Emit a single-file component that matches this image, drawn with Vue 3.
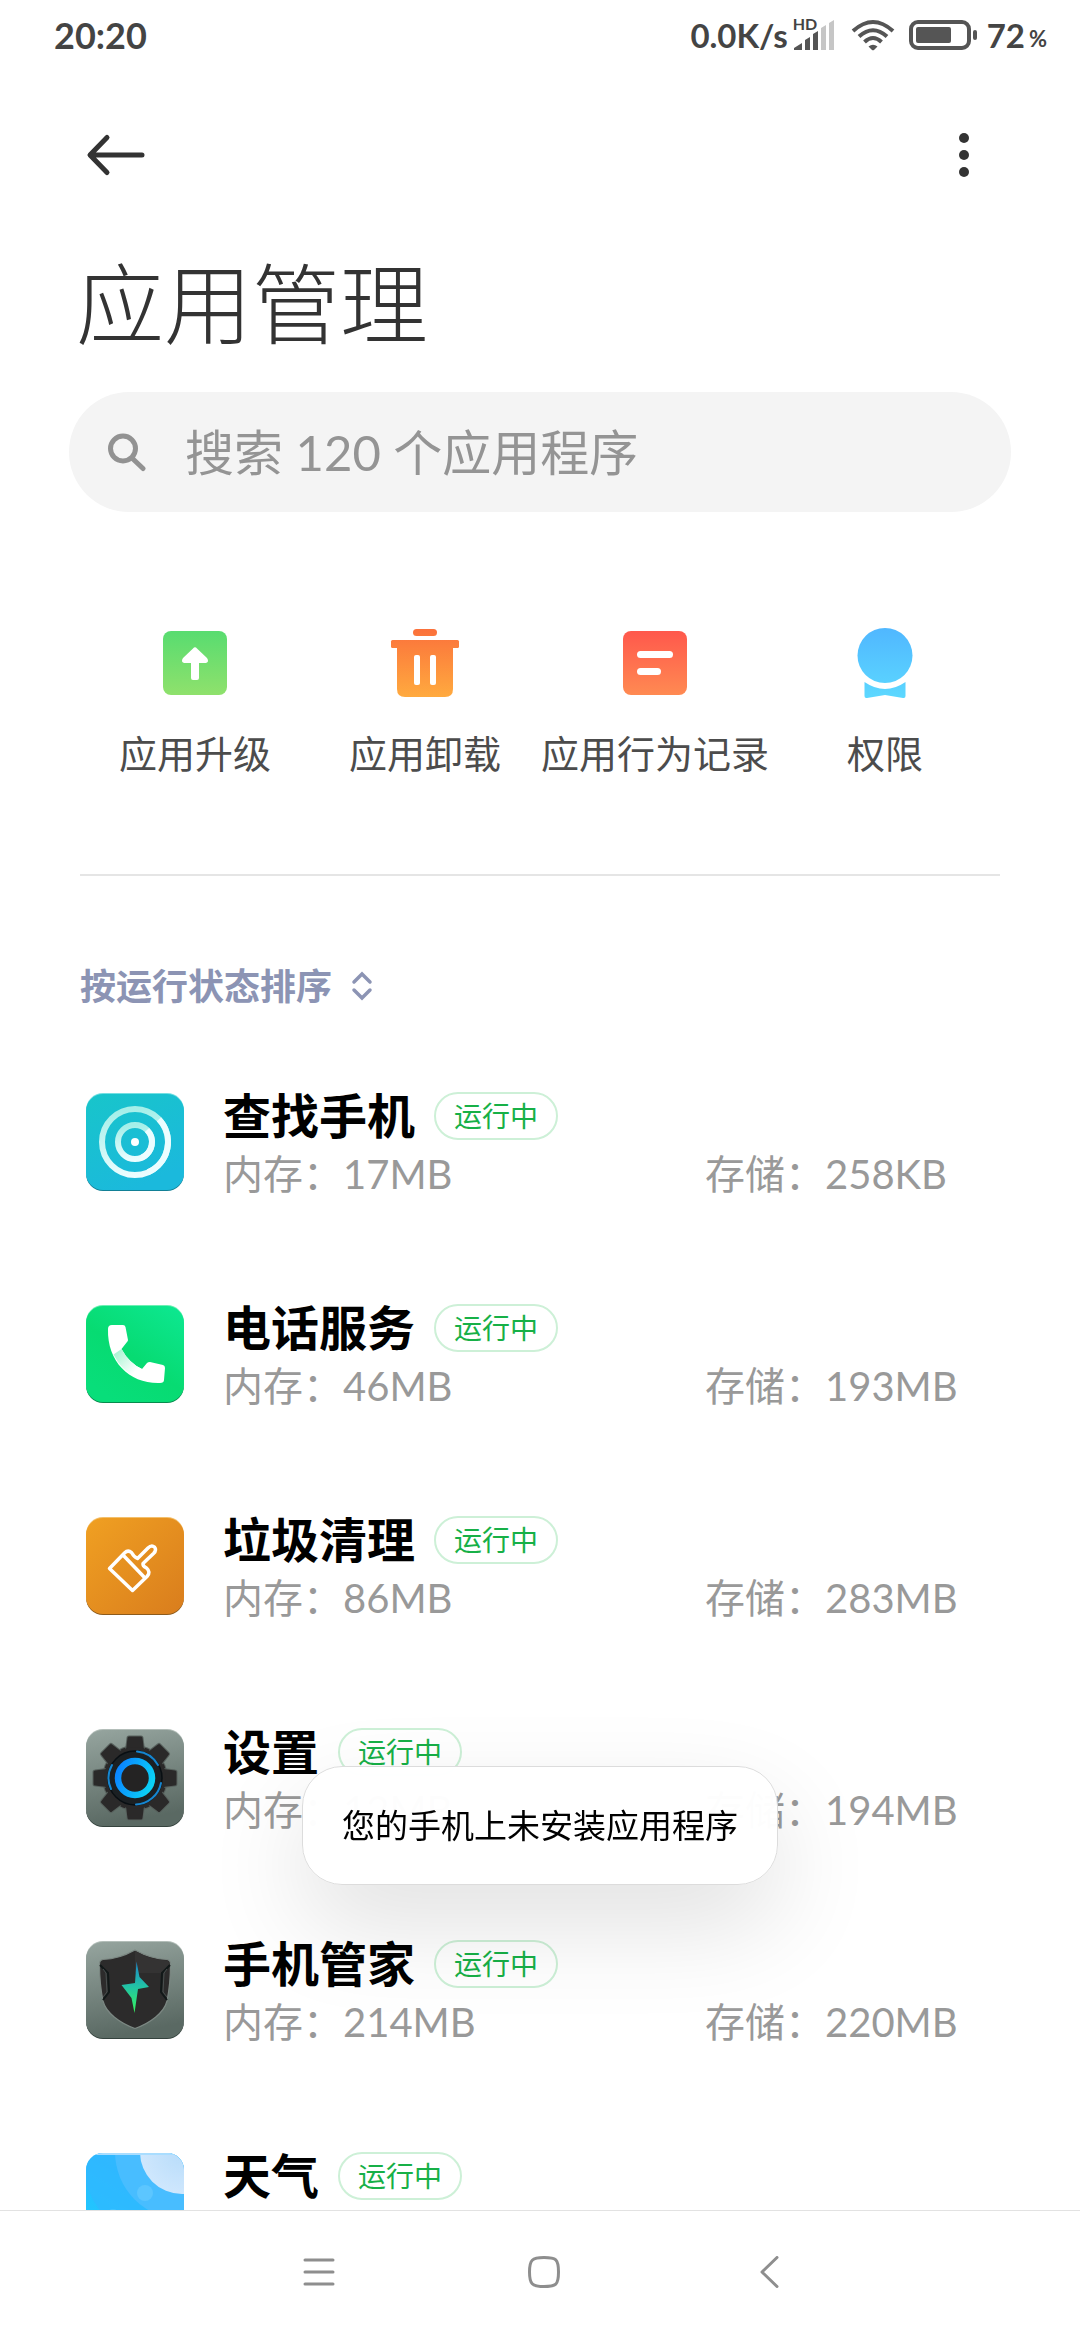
<script setup>
import { ref } from 'vue'

const keyword = ref('')

const actions = [
  { icon: 'upgrade', label: '应用升级' },
  { icon: 'uninstall', label: '应用卸载' },
  { icon: 'record', label: '应用行为记录' },
  { icon: 'permission', label: '权限' },
]

const apps = [
  { icon: 'find', name: '查找手机', memory: '17MB', storage: '258KB' },
  { icon: 'phone', name: '电话服务', memory: '46MB', storage: '193MB' },
  { icon: 'clean', name: '垃圾清理', memory: '86MB', storage: '283MB' },
  { icon: 'settings', name: '设置', memory: '12MB', storage: '194MB' },
  { icon: 'security', name: '手机管家', memory: '214MB', storage: '220MB' },
  { icon: 'weather', name: '天气' },
]

const gearTeeth = [0, 45, 90, 135, 180, 225, 270, 315]
</script>

<template>
  <div class="screen">
    <header class="status-bar">
      <span class="clock">20:20</span>
      <div class="status-right">
        <span>0.0K/s</span>
        <div class="signal">
          <span class="hd">HD</span>
          <svg width="42" height="30" viewBox="0 0 42 30">
            <path fill="#555" d="M1 30v-2l8-5v7zM12 30V20l5-3v13zM20 30V14l5-3v19z" />
            <path fill="#c6c6c6" d="M28 30V8l5-3v25zM36 30V3l5-3v30z" />
          </svg>
        </div>
        <svg class="wifi" width="44" height="32" viewBox="0 0 44 32">
          <g fill="none" stroke="#555" stroke-width="4">
            <path d="M2 12Q22 -6 42 12" />
            <path d="M8 17.500Q22 5 36 17.500" />
            <path d="M13.500 23Q22 15 30.500 23" />
          </g>
          <path fill="#555" d="M17.500 27.500Q22 24 26.500 27.500L23 31Q22 31.700 21 31z" />
        </svg>
        <svg class="battery" width="69" height="30" viewBox="0 0 69 30">
          <rect x="2" y="2" width="58" height="26" rx="7" fill="none" stroke="#555" stroke-width="4" />
          <rect x="7" y="7" width="35" height="16" rx="2" fill="#555" />
          <rect x="64" y="10" width="4" height="10" rx="2" fill="#555" />
        </svg>
        <span>72</span>
        <span class="percent">%</span>
      </div>
    </header>

    <main class="content">
      <div class="toolbar">
        <button class="icon-btn" aria-label="返回">
          <svg width="60" height="60" viewBox="0 0 60 60">
            <path
              d="M21 12.500L4 30l17 17.500M4.500 30H56"
              fill="none"
              stroke="#333"
              stroke-width="5"
              stroke-linecap="round"
              stroke-linejoin="round"
            />
          </svg>
        </button>
        <button class="icon-btn" aria-label="更多">
          <svg width="60" height="60" viewBox="0 0 60 60" fill="#333">
            <circle cx="30" cy="13" r="5" />
            <circle cx="30" cy="30" r="5" />
            <circle cx="30" cy="47" r="5" />
          </svg>
        </button>
      </div>

      <h1 class="title">应用管理</h1>

      <label class="search">
        <svg width="40" height="40" viewBox="0 0 40 40" fill="none" stroke="#929292">
          <circle cx="16" cy="16.500" r="12.500" stroke-width="5" />
          <path d="M26 27l10 9.500" stroke-width="5" stroke-linecap="round" />
        </svg>
        <input v-model="keyword" type="text" placeholder="搜索 120 个应用程序" />
      </label>

      <nav class="actions">
        <button v-for="item in actions" :key="item.icon" class="action">
          <svg v-if="item.icon === 'upgrade'" width="80" height="80" viewBox="0 0 80 80">
            <defs>
              <linearGradient id="g-upgrade" x1="0" y1="0" x2="0" y2="1">
                <stop offset="0" stop-color="#58dc70" />
                <stop offset="1" stop-color="#8fe16c" />
              </linearGradient>
            </defs>
            <rect x="8" y="8" width="64" height="64" rx="8" fill="url(#g-upgrade)" />
            <path
              fill="#fff"
              d="M38 25.500Q40 23 42 25.500L52 35Q54.500 39 51 40H44V55Q44 57 42 57H38Q36 57 36 55V40H29Q25.500 39 28 35z"
            />
          </svg>
          <svg v-else-if="item.icon === 'uninstall'" width="80" height="80" viewBox="0 0 80 80">
            <defs>
              <linearGradient id="g-uninstall" gradientUnits="userSpaceOnUse" x1="0" y1="6" x2="0" y2="74">
                <stop offset="0" stop-color="#fb713b" />
                <stop offset="1" stop-color="#ffaa3f" />
              </linearGradient>
            </defs>
            <g fill="url(#g-uninstall)">
              <rect x="28" y="6" width="24" height="7" rx="3.500" />
              <rect x="6" y="17" width="68" height="8" rx="1.500" />
              <path d="M12 22H68V66Q68 74 60 74H20Q12 74 12 66z" />
            </g>
            <rect x="29" y="32" width="6" height="30" rx="2" fill="#fff" />
            <rect x="45" y="32" width="6" height="30" rx="2" fill="#fff" />
          </svg>
          <svg v-else-if="item.icon === 'record'" width="80" height="80" viewBox="0 0 80 80">
            <defs>
              <linearGradient id="g-record" x1="0" y1="0" x2="0" y2="1">
                <stop offset="0" stop-color="#ff584c" />
                <stop offset="1" stop-color="#ff8a52" />
              </linearGradient>
            </defs>
            <rect x="8" y="8" width="64" height="64" rx="8" fill="url(#g-record)" />
            <rect x="22" y="28" width="36" height="7" rx="3.500" fill="#fff" />
            <rect x="22" y="45" width="24" height="7" rx="3.500" fill="#fff" />
          </svg>
          <svg v-else width="80" height="80" viewBox="0 0 80 80">
            <defs>
              <linearGradient id="g-permission" gradientUnits="userSpaceOnUse" x1="0" y1="5" x2="0" y2="75">
                <stop offset="0" stop-color="#50b7ff" />
                <stop offset="1" stop-color="#5cd8ff" />
              </linearGradient>
            </defs>
            <g fill="url(#g-permission)">
              <circle cx="40" cy="32.500" r="27.500" />
              <path d="M19.500 59Q40 73 60.500 59V73Q60.500 75.500 58 75L40 72 22 75Q19.500 75.500 19.500 73z" />
            </g>
          </svg>
          <span>{{ item.label }}</span>
        </button>
      </nav>

      <hr class="divider" />

      <button class="sort">
        <span>按运行状态排序</span>
        <svg width="24" height="32" viewBox="0 0 24 32">
          <path
            d="M4 12L12 4l8 8M4 20l8 8 8-8"
            fill="none"
            stroke="#8c94b4"
            stroke-width="3.500"
            stroke-linecap="round"
          />
        </svg>
      </button>

      <ul class="app-list">
        <li v-for="app in apps" :key="app.name" class="app">
          <svg v-if="app.icon === 'find'" class="app-icon" viewBox="0 0 100 100">
            <defs>
              <linearGradient id="g-find" x1="0" y1="0" x2="0.500" y2="1">
                <stop offset="0" stop-color="#18c5ca" />
                <stop offset="1" stop-color="#1bb9dc" />
              </linearGradient>
              <linearGradient id="g-find-ring" x1="0.500" y1="0" x2="0.600" y2="1">
                <stop offset="0" stop-color="#a5efe9" />
                <stop offset="1" stop-color="#ecfdff" />
              </linearGradient>
            </defs>
            <rect x="1" y="3" width="98" height="96" rx="17" fill="#128096" />
            <rect x="1" y="1" width="98" height="96" rx="17" fill="#74dfe2" />
            <rect x="1" y="2" width="98" height="96" rx="17" fill="url(#g-find)" />
            <g fill="none" stroke="url(#g-find-ring)" stroke-width="6">
              <circle cx="50" cy="50" r="33" />
              <circle cx="50" cy="50" r="17" />
            </g>
            <g fill="none" stroke="#ecfdff" stroke-width="6">
              <path d="M74 27.300A33 33 0 0 1 63 80.300" />
              <path d="M62 38A17 17 0 0 1 57 65.500" />
            </g>
            <circle cx="50" cy="50" r="4" fill="#fff" />
          </svg>

          <svg v-else-if="app.icon === 'phone'" class="app-icon" viewBox="0 0 100 100">
            <defs>
              <linearGradient id="g-phone" x1="1" y1="0" x2="0.300" y2="1">
                <stop offset="0" stop-color="#0de892" />
                <stop offset="0.600" stop-color="#07db72" />
                <stop offset="1" stop-color="#08de7a" />
              </linearGradient>
              <linearGradient id="g-handset" gradientUnits="userSpaceOnUse" x1="31" y1="47" x2="52" y2="66">
                <stop offset="0" stop-color="#a8f4d2" />
                <stop offset="1" stop-color="#fff" />
              </linearGradient>
            </defs>
            <rect x="1" y="3" width="98" height="96" rx="17" fill="#078b4d" />
            <rect x="1" y="1" width="98" height="96" rx="17" fill="#6cf0b3" />
            <rect x="1" y="2" width="98" height="96" rx="17" fill="url(#g-phone)" />
            <path
              fill="#fff"
              d="M23 25Q23 21 27 21H38Q40 21 40.500 23L43 36Q43 37 42 38L36.500 45Q44 59 57 65L62 59Q63 58 65 58L78 61Q80 61.500 80 64L79 76Q79 79 75 79C45 80 22 58 23 25z"
            />
            <path fill="url(#g-handset)" d="M36.500 45Q44 59 57 65L52 74Q36 66 28.500 50.500z" />
          </svg>

          <svg v-else-if="app.icon === 'clean'" class="app-icon" viewBox="0 0 100 100">
            <defs>
              <linearGradient id="g-clean" x1="0" y1="0" x2="1" y2="1">
                <stop offset="0" stop-color="#f0a022" />
                <stop offset="1" stop-color="#d97d1d" />
              </linearGradient>
            </defs>
            <rect x="1" y="3" width="98" height="96" rx="17" fill="#8d5b1c" />
            <rect x="1" y="1" width="98" height="96" rx="17" fill="#f3c06c" />
            <rect x="1" y="2" width="98" height="96" rx="17" fill="url(#g-clean)" />
            <path
              d="M24.500 52.500L39.500 37Q43 33.500 46.500 36.500Q49 41 52.500 42.500L63 32Q66.500 28.500 69.500 31Q72 34 68.500 37.500L58 47.500Q57.500 50 61.500 52Q66 56 62 60.500L47.500 74.500zM38 39L60 62"
              fill="none"
              stroke="#fff"
              stroke-width="3.500"
              stroke-linejoin="round"
            />
          </svg>

          <svg v-else-if="app.icon === 'settings'" class="app-icon" viewBox="0 0 100 100">
            <defs>
              <linearGradient id="g-metal" x1="0" y1="0" x2="0.200" y2="1">
                <stop offset="0" stop-color="#96a59f" />
                <stop offset="1" stop-color="#5a6963" />
              </linearGradient>
              <linearGradient id="g-ring" x1="0" y1="0.300" x2="1" y2="0.700">
                <stop offset="0" stop-color="#0a86ff" />
                <stop offset="1" stop-color="#0bd2f5" />
              </linearGradient>
            </defs>
            <rect x="1" y="3" width="98" height="96" rx="17" fill="#35433e" />
            <rect x="1" y="1" width="98" height="96" rx="17" fill="#b3beb9" />
            <rect x="1" y="2" width="98" height="96" rx="17" fill="url(#g-metal)" />
            <g fill="#2a2929" stroke="#58625e" stroke-width="2" paint-order="stroke">
              <circle cx="50" cy="50" r="32" />
              <path
                v-for="angle in gearTeeth"
                :key="angle"
                d="M41 22L42.500 10Q42.500 8.500 44 8.500H56Q57.500 8.500 57.500 10L59 22z"
                :transform="`rotate(${angle} 50 50)`"
              />
            </g>
            <circle cx="50" cy="50" r="31" fill="#2a2929" />
            <circle cx="50" cy="50" r="27" fill="#1b2023" stroke="#090f13" stroke-width="1.500" />
            <g fill="none" stroke="#1686d0" stroke-width="2" stroke-linecap="round">
              <path d="M52 23.500A26.500 26.500 0 0 1 73 37" />
              <path d="M76 55A26.500 26.500 0 0 1 51 76.500" />
              <path d="M26 61A26.500 26.500 0 0 1 27 37" />
            </g>
            <circle cx="50" cy="50" r="17" fill="#242323" stroke="url(#g-ring)" stroke-width="6.500" />
          </svg>

          <svg v-else-if="app.icon === 'security'" class="app-icon" viewBox="0 0 100 100">
            <defs>
              <linearGradient id="g-metal-2" x1="0" y1="0" x2="0.200" y2="1">
                <stop offset="0" stop-color="#96a59f" />
                <stop offset="1" stop-color="#5a6963" />
              </linearGradient>
              <linearGradient id="g-bolt" x1="0" y1="0" x2="0" y2="1">
                <stop offset="0" stop-color="#1d86c8" />
                <stop offset="0.500" stop-color="#22c4a4" />
                <stop offset="1" stop-color="#38f55c" />
              </linearGradient>
            </defs>
            <rect x="1" y="3" width="98" height="96" rx="17" fill="#35433e" />
            <rect x="1" y="1" width="98" height="96" rx="17" fill="#b3beb9" />
            <rect x="1" y="2" width="98" height="96" rx="17" fill="url(#g-metal-2)" />
            <path
              fill="#2c2b2b"
              stroke="#7c8883"
              stroke-width="1.200"
              d="M50 10Q66 19 82 19.500Q85.500 20 85.500 24Q85.500 44 82 61C79 73 65 83 50 88.500C35 83 21 73 18 61Q14.500 44 14.500 24Q14.500 20 18 19.500Q34 19 50 10z"
            />
            <path fill="#343333" d="M50 11Q66 20 82 20.500Q84.500 21 84 25L77 33 50 33z" />
            <path
              d="M15 25L23 33 24 52 18 60M85 25L77 33 76 52 82 60"
              fill="none"
              stroke="#111818"
              stroke-width="2"
            />
            <path
              d="M18 29L21 33 22 52 18 57M82 29L79 33 78 52 82 57"
              fill="none"
              stroke="#49504f"
              stroke-width="1"
            />
            <path
              fill="url(#g-bolt)"
              d="M51.500 21.500L54.500 37 64 47 53 49 49.500 73 46.500 58 36.500 45 50 43z"
            />
          </svg>

          <svg v-else class="app-icon" viewBox="0 0 100 100">
            <defs>
              <clipPath id="c-weather">
                <rect x="1" y="1" width="98" height="98" rx="17" />
              </clipPath>
              <linearGradient id="g-weather" x1="0.400" y1="0" x2="0" y2="0.700">
                <stop offset="0" stop-color="#2fb5ff" />
                <stop offset="1" stop-color="#1fc8ff" />
              </linearGradient>
              <radialGradient id="g-sun">
                <stop offset="0" stop-color="#b7dcfa" />
                <stop offset="1" stop-color="#cfe7fd" />
              </radialGradient>
            </defs>
            <g clip-path="url(#c-weather)">
              <rect width="100" height="100" fill="url(#g-weather)" />
              <circle cx="97" cy="0" r="101" fill="#30b8ff" fill-opacity="0.700" />
              <circle cx="97" cy="0" r="67" fill="#48bdff" />
              <circle cx="97" cy="0" r="42" fill="url(#g-sun)" />
              <circle cx="60" cy="41" r="8" fill="#5cc6ff" />
              <circle cx="28" cy="64" r="7" fill="#42c3ff" />
              <path d="M1 2H99" stroke="#a9ddff" stroke-width="2" />
            </g>
          </svg>

          <div class="app-body">
            <div class="app-head">
              <span class="app-name">{{ app.name }}</span>
              <span class="badge">运行中</span>
            </div>
            <div v-if="app.memory" class="app-usage">
              <span class="memory">内存：{{ app.memory }}</span>
              <span class="storage">存储：{{ app.storage }}</span>
            </div>
          </div>
        </li>
      </ul>
    </main>

    <footer class="nav-bar">
      <button class="nav-btn" aria-label="任务">
        <svg width="32" height="32" viewBox="0 0 32 32">
          <path d="M2 4H30M2 16H30M2 28H30" stroke="#8e8e8e" stroke-width="3" stroke-linecap="round" />
        </svg>
      </button>
      <button class="nav-btn" aria-label="主页">
        <svg width="32" height="32" viewBox="0 0 32 32">
          <path
            d="M16 1.500C28 1.500 30.500 3 30.500 16S28 30.500 16 30.500 1.500 28 1.500 16 4 1.500 16 1.500z"
            fill="none"
            stroke="#8e8e8e"
            stroke-width="3"
          />
        </svg>
      </button>
      <button class="nav-btn" aria-label="返回">
        <svg width="32" height="32" viewBox="0 0 32 32">
          <path
            d="M24 1.500L9 16l15 14.500"
            fill="none"
            stroke="#8e8e8e"
            stroke-width="3"
            stroke-linecap="round"
            stroke-linejoin="round"
          />
        </svg>
      </button>
    </footer>

    <div class="toast-layer">
      <div class="toast" role="status">您的手机上未安装应用程序</div>
    </div>
  </div>
</template>

<style>
body {
  margin: 0;
  background: #fff;
}
</style>

<style scoped>
.screen {
  height: 100vh;
  display: flex;
  flex-direction: column;
  overflow: hidden;
  background: #fff;
  color: #333;
  font-family: Lato, 'Noto Sans CJK SC', sans-serif;
}

button {
  padding: 0;
  border: none;
  background: none;
  color: inherit;
  font: inherit;
  cursor: pointer;
}

svg {
  display: block;
  flex-shrink: 0;
}

/* Status bar */
.status-bar {
  height: 70px;
  flex-shrink: 0;
  padding: 0 33px 0 54px;
  display: flex;
  align-items: center;
  justify-content: space-between;
  color: #444;
  font-size: 33px;
  font-weight: 700;
  line-height: 40px;
}

.clock {
  font-size: 36px;
}

.status-right {
  display: flex;
  align-items: center;
}

.signal {
  position: relative;
  margin: 0 16px 0 5px;
}

.hd {
  position: absolute;
  top: -4px;
  left: 0;
  font-size: 16px;
  line-height: 16px;
}

.battery {
  margin: 0 9px 0 14px;
}

.percent {
  margin: 8px 0 0 4px;
  font-size: 22px;
  line-height: 24px;
}

/* Page */
.content {
  flex: 1;
  min-height: 0;
  padding: 0 80px;
  overflow: hidden;
}

.toolbar {
  height: 170px;
  display: flex;
  align-items: center;
  justify-content: space-between;
  padding: 0 6px;
}

.title {
  margin: 0 -4px;
  font-size: 88px;
  font-weight: 300;
  line-height: 126px;
}

.search {
  height: 120px;
  margin: 26px -11px 0;
  padding: 0 38px;
  display: flex;
  align-items: center;
  gap: 38px;
  border-radius: 60px;
  background: #f4f4f4;
}

.search input {
  flex: 1;
  min-width: 0;
  padding: 0;
  border: none;
  outline: none;
  background: none;
  color: #333;
  font: inherit;
  font-size: 49px;
  line-height: 64px;
}

.search input::placeholder {
  color: #949494;
  opacity: 1;
}

.actions {
  margin-top: 111px;
  display: grid;
  grid-template-columns: repeat(4, 1fr);
}

.action {
  display: flex;
  flex-direction: column;
  align-items: center;
  gap: 24px;
  color: #4c4c4c;
  font-size: 38px;
  line-height: 52px;
  white-space: nowrap;
}

.divider {
  height: 2px;
  margin: 95px 0 84px;
  border: none;
  background: #e5e5e5;
}

.sort {
  display: flex;
  align-items: center;
  gap: 18px;
  color: #8c94b4;
  font-size: 36px;
  font-weight: 700;
  line-height: 52px;
}

/* App list */
.app-list {
  margin: 24px 0 0;
  padding: 0;
  list-style: none;
}

.app {
  height: 156px;
  padding: 56px 0 0 5px;
  display: flex;
  align-items: flex-start;
  gap: 38px;
}

.app-icon {
  width: 100px;
  height: 100px;
}

.app-body {
  flex: 1;
}

.app-head {
  display: flex;
  align-items: center;
  gap: 19px;
}

.app-name {
  color: #000;
  font-size: 48px;
  font-weight: 700;
  line-height: 48px;
}

.badge {
  padding: 0 18px;
  border: 2px solid #cdf0d7;
  border-radius: 24px;
  color: #17b047;
  font-size: 28px;
  line-height: 44px;
}

.app-usage {
  margin-top: 6px;
  display: flex;
  color: #999;
  font-size: 40px;
  line-height: 56px;
}

.memory {
  flex: 1;
}

.storage {
  width: 295px;
}

/* Navigation bar */
.nav-bar {
  height: 130px;
  padding: 0 0 8px 7px;
  box-sizing: border-box;
  flex-shrink: 0;
  display: flex;
  align-items: center;
  justify-content: center;
  gap: 193px;
  border-top: 1px solid #e2e2e2;
  background: #fff;
}

/* Toast */
.toast-layer {
  position: fixed;
  right: 0;
  bottom: 455px;
  left: 0;
  display: flex;
  justify-content: center;
  pointer-events: none;
}

.toast {
  padding: 32px 39px;
  border: 1px solid #dcdcdc;
  border-radius: 40px;
  background: rgba(255, 255, 255, 0.98);
  box-shadow: 0 40px 100px rgba(0, 0, 0, 0.12);
  color: #000;
  font-size: 33px;
  line-height: 53px;
}
</style>
